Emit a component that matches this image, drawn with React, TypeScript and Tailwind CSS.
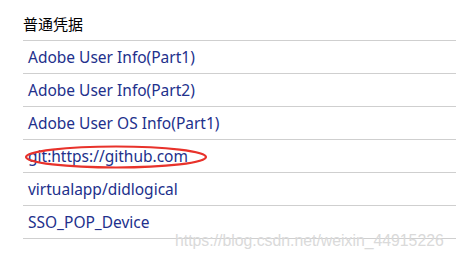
import React from "react";

const credentials = [
  "Adobe User Info(Part1)",
  "Adobe User Info(Part2)",
  "Adobe User OS Info(Part1)",
  "git:https://github.com",
  "virtualapp/didlogical",
  "SSO_POP_Device",
];

export default function App() {
  return (
    <div
      className="relative h-[258px] w-[456px] overflow-hidden bg-white"
      style={{ fontFamily: '"Noto Sans", "Noto Sans CJK SC", sans-serif' }}
    >
      <div className="pl-[23px]">
        <div className="h-[41px] border-b border-[#cfcfcf] pt-[14px] text-[15px] leading-5 text-black">
          普通凭据
        </div>
        {credentials.map((name) => (
          <div
            key={name}
            className="relative h-[33px] border-b border-[#cfcfcf] pl-[5px] text-[15.5px] leading-[32px] text-[#22308c]"
          >
            {name}
            {name.startsWith("git:") && (
              <svg className="absolute left-[1px] top-[4px]" width="186" height="26" viewBox="0 0 186 26">
                <ellipse cx="92" cy="13" rx="90" ry="10.5" fill="none" stroke="#e8322b" strokeWidth="2.2" />
              </svg>
            )}
          </div>
        ))}
      </div>
      <div
        className="absolute left-[175px] top-[229px] text-[15.8px] text-[#dadada]"
        style={{ fontFamily: '"Liberation Sans", Arial, sans-serif' }}
      >
        https://blog.csdn.net/weixin_44915226
      </div>
    </div>
  );
}
